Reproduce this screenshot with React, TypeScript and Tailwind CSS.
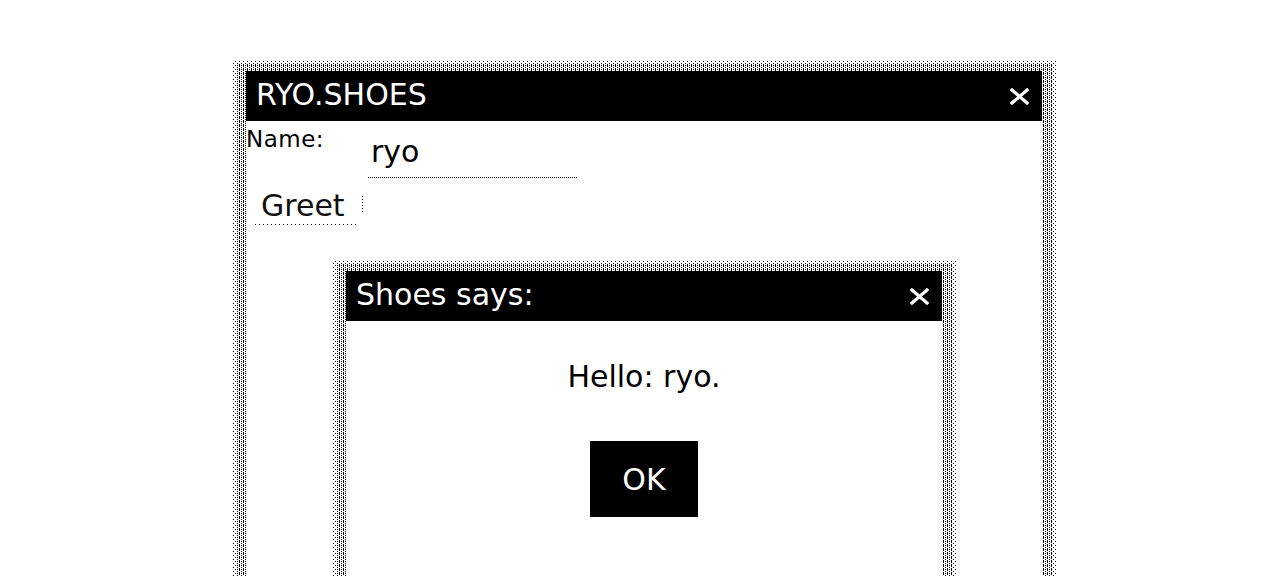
import React from "react";

function CloseX() {
  return (
    <svg width="19" height="17" viewBox="0 0 19 17" className="shrink-0">
      <path d="M2 2 L17 15 M17 2 L2 15" stroke="#fff" strokeWidth="3.2" strokeLinecap="square" fill="none" />
    </svg>
  );
}

function Halo({ children }: { children: React.ReactNode }) {
  return (
    <div className="bg-[conic-gradient(at_3px_1px,#000_25%,transparent_0),conic-gradient(at_3px_1px,#000_25%,transparent_0)] bg-[length:4px_4px] bg-[position:0_0,2px_2px] px-[4px] pt-[3px]">
      <div className="bg-[conic-gradient(at_3px_1px,#000_25%,transparent_0),conic-gradient(at_3px_1px,#000_25%,transparent_0)] bg-[length:4px_2px] bg-[position:0_0,2px_1px] px-[10px] pt-[7px]">
        {children}
      </div>
    </div>
  );
}

function TitleBar({ title }: { title: string }) {
  return (
    <div className="flex h-[50px] items-center justify-between bg-black pl-[10px] pr-[13px] pb-[3px] text-white">
      <span className="text-[30px] leading-[36px]">{title}</span>
      <span className="pt-[3px]">
        <CloseX />
      </span>
    </div>
  );
}

export default function App() {
  return (
    <div className="relative h-[576px] w-full overflow-hidden bg-white font-['DejaVu_Sans',sans-serif] text-black">
      <div className="pl-[232px] pt-[61px]">
        <div className="w-[824px]">
          <Halo>
            <div className="relative h-[560px] w-[796px] bg-white">
              <TitleBar title="RYO.SHOES" />
              <div className="flex items-start">
                <div className="mt-[6px] w-[122px] text-[23px] leading-[24px] tracking-[0.5px]">Name:</div>
                <div className="mt-[13px] w-[209px] border-b border-dotted border-black pl-[3px] pb-[7px] text-[30px] leading-[36px]">
                  ryo
                </div>
              </div>
              <div className="relative mt-[10px] h-[42px] w-[118px]">
                <div className="pl-[15px] text-[30px] leading-[36px] text-[#111]">Greet</div>
                <span className="absolute left-[116px] top-[8px] h-[17px] w-px bg-[repeating-linear-gradient(180deg,#000_0_1px,transparent_1px_3px)]" />
                <span className="absolute left-[9px] top-[36px] h-px w-[101px] bg-[repeating-linear-gradient(90deg,#000_0_1px,transparent_1px_4px)]" />
              </div>

              <div className="absolute left-[86px] top-[190px] w-[624px]">
                <Halo>
                  <div className="h-[400px] w-[596px] bg-white">
                    <TitleBar title="Shoes says:" />
                    <div className="flex flex-col items-center">
                      <div className="mt-[38px] text-[30px] leading-[36px]">Hello: ryo.</div>
                      <div className="mt-[46px] flex h-[76px] w-[108px] items-center justify-center bg-black pt-[2px] text-[30px] leading-[36px] text-white">
                        OK
                      </div>
                    </div>
                  </div>
                </Halo>
              </div>
            </div>
          </Halo>
        </div>
      </div>
    </div>
  );
}
